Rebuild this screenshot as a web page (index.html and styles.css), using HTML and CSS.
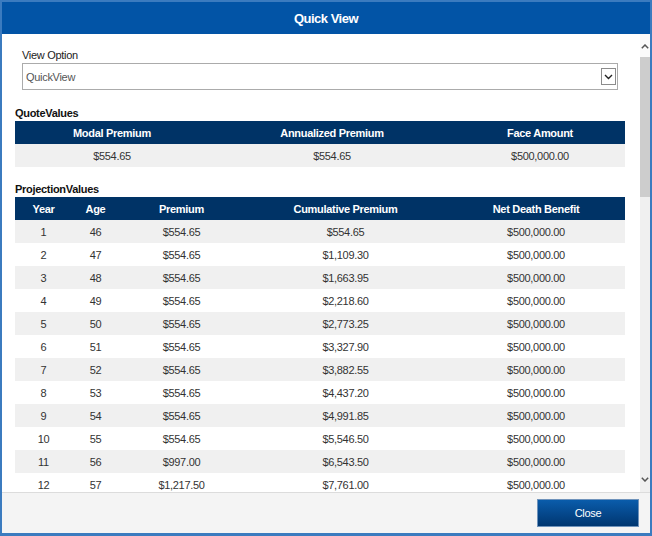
FILE: index.html
```html
<!DOCTYPE html>
<html>
<head>
<meta charset="utf-8">
<link rel="stylesheet" href="styles.css">
</head>
<body>
<div class="window">
  <header class="titlebar">Quick View</header>
  <div class="main">
    <div class="content">
      <div class="field">
        <div class="field-label">View Option</div>
        <div class="select">
          <span class="select-value">QuickView</span>
          <span class="select-btn"><svg width="9" height="6" viewBox="0 0 9 6"><path d="M1 1 L4.5 4.5 L8 1" fill="none" stroke="#222" stroke-width="1.4"/></svg></span>
        </div>
      </div>

      <h3 class="section-title">QuoteValues</h3>
      <table class="grid quote">
        <colgroup><col class="q1"><col class="q2"><col class="q3"></colgroup>
        <thead><tr><th>Modal Premium</th><th>Annualized Premium</th><th>Face Amount</th></tr></thead>
        <tbody><tr><td>$554.65</td><td>$554.65</td><td>$500,000.00</td></tr></tbody>
      </table>

      <h3 class="section-title">ProjectionValues</h3>
      <table class="grid proj">
        <colgroup><col class="p1"><col class="p2"><col class="p3"><col class="p4"><col class="p5"></colgroup>
        <thead><tr><th>Year</th><th>Age</th><th>Premium</th><th>Cumulative Premium</th><th>Net Death Benefit</th></tr></thead>
        <tbody>
          <tr><td>1</td><td>46</td><td>$554.65</td><td>$554.65</td><td>$500,000.00</td></tr>
          <tr><td>2</td><td>47</td><td>$554.65</td><td>$1,109.30</td><td>$500,000.00</td></tr>
          <tr><td>3</td><td>48</td><td>$554.65</td><td>$1,663.95</td><td>$500,000.00</td></tr>
          <tr><td>4</td><td>49</td><td>$554.65</td><td>$2,218.60</td><td>$500,000.00</td></tr>
          <tr><td>5</td><td>50</td><td>$554.65</td><td>$2,773.25</td><td>$500,000.00</td></tr>
          <tr><td>6</td><td>51</td><td>$554.65</td><td>$3,327.90</td><td>$500,000.00</td></tr>
          <tr><td>7</td><td>52</td><td>$554.65</td><td>$3,882.55</td><td>$500,000.00</td></tr>
          <tr><td>8</td><td>53</td><td>$554.65</td><td>$4,437.20</td><td>$500,000.00</td></tr>
          <tr><td>9</td><td>54</td><td>$554.65</td><td>$4,991.85</td><td>$500,000.00</td></tr>
          <tr><td>10</td><td>55</td><td>$554.65</td><td>$5,546.50</td><td>$500,000.00</td></tr>
          <tr><td>11</td><td>56</td><td>$997.00</td><td>$6,543.50</td><td>$500,000.00</td></tr>
          <tr><td>12</td><td>57</td><td>$1,217.50</td><td>$7,761.00</td><td>$500,000.00</td></tr>
        </tbody>
      </table>
    </div>
    <div class="scrollbar">
      <div class="sb-arrow sb-up"><svg width="8" height="5" viewBox="0 0 8 5"><path d="M0.8 4.2 L4 1 L7.2 4.2" fill="none" stroke="#555" stroke-width="1.5"/></svg></div>
      <div class="sb-track"><div class="sb-thumb"></div></div>
      <div class="sb-arrow sb-down"><svg width="8" height="5" viewBox="0 0 8 5"><path d="M0.8 0.8 L4 4 L7.2 0.8" fill="none" stroke="#555" stroke-width="1.5"/></svg></div>
    </div>
  </div>
  <footer class="footer"><button class="btn">Close</button></footer>
</div>
</body>
</html>
```
FILE: styles.css
```css
* { box-sizing: border-box; }
html, body { margin: 0; padding: 0; }
body {
  width: 652px;
  height: 536px;
  font-family: "Liberation Sans", Arial, sans-serif;
  font-size: 11px;
  letter-spacing: -0.3px;
  color: #333;
  background: #fff;
  overflow: hidden;
}
.window {
  width: 652px;
  height: 536px;
  border-style: solid;
  border-color: #3b7bbf;
  border-width: 2px 2px 3px 2px;
  display: flex;
  flex-direction: column;
  background: #fff;
}
.titlebar {
  height: 32px;
  flex: none;
  background: #0254a6;
  color: #fff;
  font-weight: bold;
  font-size: 13px;
  letter-spacing: -0.5px;
  display: flex;
  align-items: center;
  justify-content: center;
}
.main {
  height: 458px;
  flex: none;
  display: flex;
}
.content {
  flex: 1;
  padding: 14px 15px 0 13px;
  overflow: hidden;
}
.scrollbar {
  width: 10px;
  flex: none;
  display: flex;
  flex-direction: column;
  background: #f0f0f0;
}
.sb-arrow {
  height: 23px;
  flex: none;
  display: flex;
  align-items: center;
  justify-content: center;
}
.sb-up { background: #fafafa; align-items: flex-start; padding-top: 10px; }
.sb-down { height: 22px; align-items: flex-start; padding-top: 7px; }
.sb-track { flex: 1; }
.sb-thumb { height: 140px; background: #cdcdcd; }

.field { padding: 0 7px; }
.field-label { line-height: 14px; color: #222; }
.select {
  margin-top: 1px;
  height: 27px;
  border: 1px solid #ababab;
  display: flex;
  align-items: center;
  justify-content: space-between;
  padding: 0 1px 0 3px;
}
.select-value { color: #555; }
.select-btn {
  width: 15px;
  height: 17px;
  border: 1px solid #8c8c8c;
  background: #fff;
  display: flex;
  align-items: center;
  justify-content: center;
}
.section-title {
  margin: 16px 0 1px 0;
  font-size: 11px;
  line-height: 14px;
  font-weight: bold;
  color: #111;
}
.grid {
  width: 610px;
  border-collapse: collapse;
  table-layout: fixed;
}
.grid th {
  height: 23px;
  padding: 0;
  background: #003366;
  color: #fff;
  font-weight: bold;
  text-align: center;
}
.grid td {
  height: 23px;
  padding: 0;
  text-align: center;
  color: #333;
}
.grid tbody tr:nth-child(odd) td { background: #f0f0f0; }
.quote + .section-title { margin-top: 15px; }
.q1 { width: 194px; }
.q2 { width: 246px; }
.q3 { width: 170px; }
.p1 { width: 57px; }
.p2 { width: 47px; }
.p3 { width: 125px; }
.p4 { width: 203px; }
.p5 { width: 178px; }

.footer {
  height: 41px;
  flex: none;
  border-top: 1px solid #dcdcdc;
  background: #f4f4f4;
  display: flex;
  justify-content: flex-end;
  align-items: flex-start;
  padding: 6px 11px 0 0;
}
.btn {
  width: 102px;
  height: 28px;
  border: 1px solid #6f93bb;
  background: linear-gradient(#0a5cab, #003670);
  color: #fff;
  font-family: inherit;
  font-size: 11px;
  letter-spacing: -0.3px;
  padding: 0;
}
```
